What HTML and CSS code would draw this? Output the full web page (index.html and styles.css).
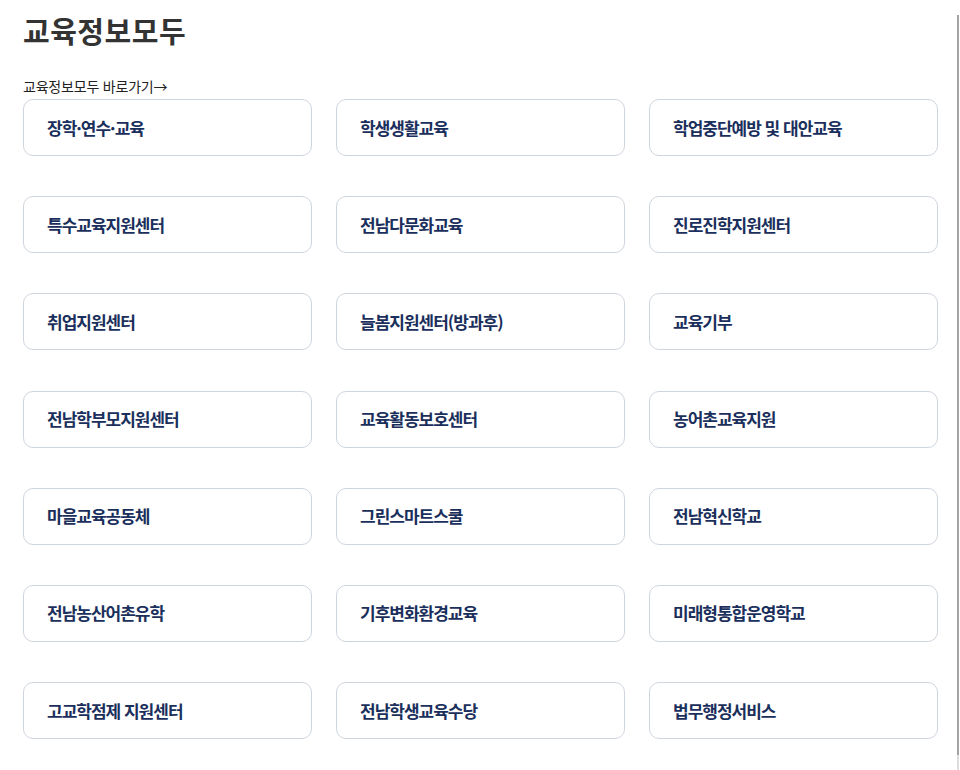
FILE: index.html
```html
<!DOCTYPE html>
<html lang="ko">
<head>
  <meta charset="UTF-8">
  <title>교육정보모두</title>
  <link rel="stylesheet" href="styles.css">
</head>
<body>
  <div class="wrap">
    <h2 class="title">교육정보모두</h2>
    <a class="go-link" href="#">교육정보모두 바로가기→</a>
    <div class="grid">
      <a class="card" href="#">장학·연수·교육</a>
      <a class="card" href="#">학생생활교육</a>
      <a class="card" href="#">학업중단예방 및 대안교육</a>
      <a class="card" href="#">특수교육지원센터</a>
      <a class="card" href="#">전남다문화교육</a>
      <a class="card" href="#">진로진학지원센터</a>
      <a class="card" href="#">취업지원센터</a>
      <a class="card" href="#">늘봄지원센터(방과후)</a>
      <a class="card" href="#">교육기부</a>
      <a class="card" href="#">전남학부모지원센터</a>
      <a class="card" href="#">교육활동보호센터</a>
      <a class="card" href="#">농어촌교육지원</a>
      <a class="card" href="#">마을교육공동체</a>
      <a class="card" href="#">그린스마트스쿨</a>
      <a class="card" href="#">전남혁신학교</a>
      <a class="card" href="#">전남농산어촌유학</a>
      <a class="card" href="#">기후변화환경교육</a>
      <a class="card" href="#">미래형통합운영학교</a>
      <a class="card" href="#">고교학점제 지원센터</a>
      <a class="card" href="#">전남학생교육수당</a>
      <a class="card" href="#">법무행정서비스</a>
    </div>
  </div>
  <div class="scroll-line"></div>
</body>
</html>
```

FILE: styles.css
```css
body {
  margin: 0;
  background: #fff;
  font-family: "Noto Sans CJK KR", "Noto Sans", sans-serif;
  overflow: hidden;
}
.wrap { padding: 10px 0 0 23px; width: 915px; }
.title {
  margin: 0;
  font-size: 29px;
  line-height: 40px;
  font-weight: 700;
  letter-spacing: 0.5px;
  color: #333;
}
.go-link {
  display: block;
  margin-top: 27px;
  font-size: 14px;
  line-height: 18px;
  letter-spacing: -0.2px;
  color: #222;
  text-decoration: none;
}
.grid {
  display: grid;
  grid-template-columns: repeat(3, 289px);
  column-gap: 24px;
  row-gap: 40.2px;
  margin-top: 4px;
}
.card {
  display: flex;
  align-items: center;
  box-sizing: border-box;
  height: 57px;
  padding: 0 0 1px 23px;
  border: 1px solid #cfd5de;
  border-radius: 10px;
  font-size: 17px;
  font-weight: 700;
  letter-spacing: -1px;
  color: #1b2f5c;
  text-decoration: none;
}
.scroll-line {
  position: fixed;
  top: 15px;
  right: 1px;
  width: 2px;
  height: 755px;
  background: linear-gradient(#a3a3a3 0, #a3a3a3 740px, #dcdcdc 740px);
}
```
